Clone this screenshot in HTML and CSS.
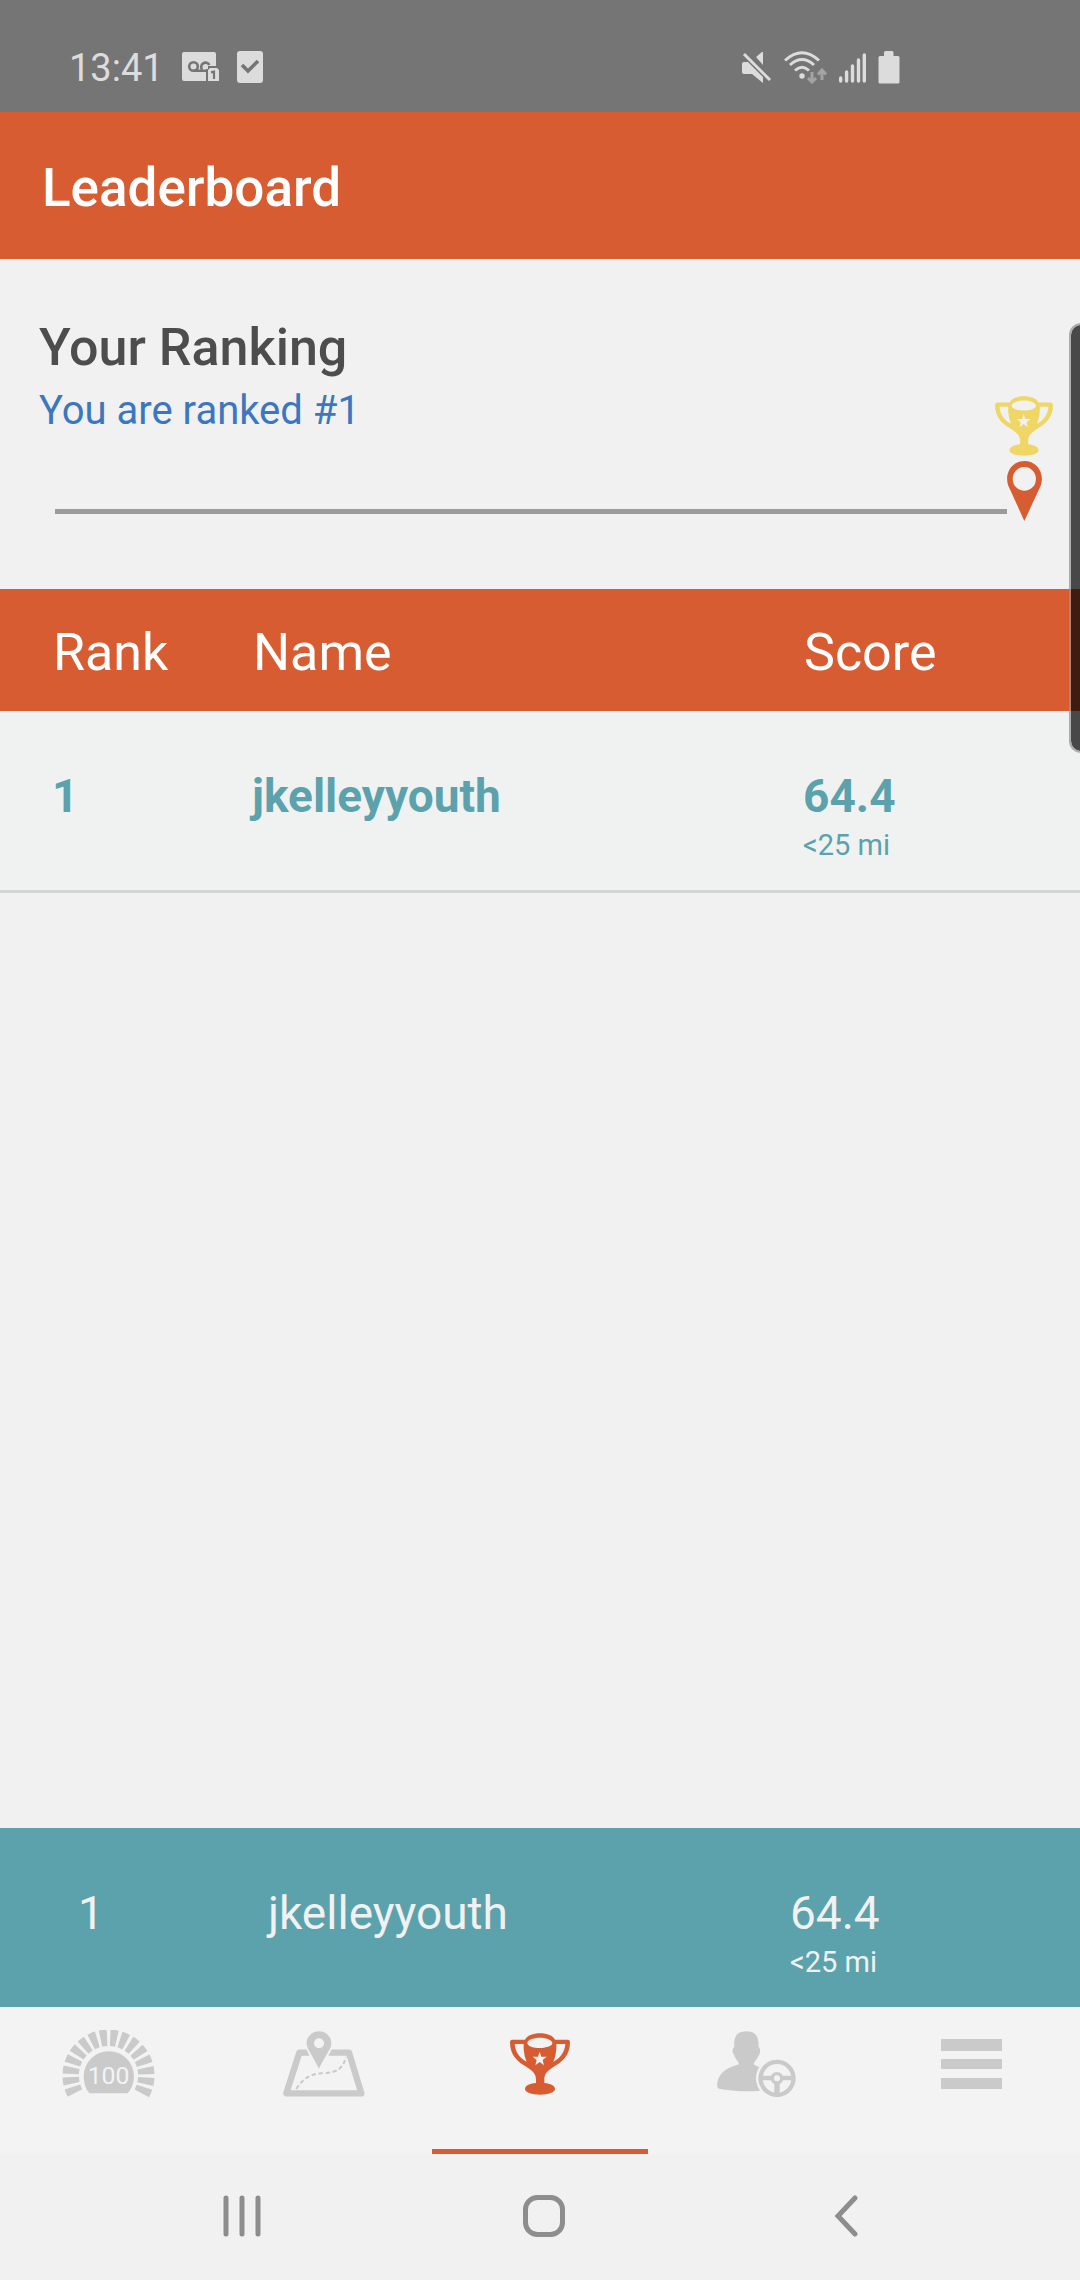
FILE: index.html
```html
<!DOCTYPE html>
<html lang="en">
<head>
<meta charset="utf-8">
<meta name="viewport" content="width=device-width, initial-scale=1">
<title>Leaderboard</title>
<link rel="stylesheet" href="styles.css">
</head>
<body>
<svg class="defs" aria-hidden="true">
  <symbol id="trophy" viewBox="272 70 180 186">
    <path fill="currentColor" fill-rule="evenodd" d="M317 90C323 78 341 71 362 71S401 78 407 90H445Q452 90 452 98C452 138 428 158 402 172C380 186 375 196 375 210V220C394 222 407 228 407 238C407 248 387 255 362 255S317 248 317 238C317 228 330 222 350 220V210C350 196 344 186 322 172C296 158 272 138 272 98Q272 90 279 90ZM362 84C341 84 324 91 324 100S341 115 362 115S399 108 399 100S383 84 362 84ZM286 103C288 127 301 146 322 156C316 142 312 124 313 103ZM438 103H411C412 124 408 142 402 156C423 146 436 127 438 103ZM361 126L356 141H340L352 151L348 167L361 157L374 167L370 151L382 141H366Z"/>
  </symbol>
</svg>
<div class="screen">
  <header class="status">
    <div class="status-group">
      <time class="clock">13:41</time>
      <svg width="37" height="30" viewBox="0 0 37 30" aria-label="Voicemail">
        <path fill="#dcdcdc" d="M2 0H32Q34 0 34 2V14H26V17H24V29H2Q0 29 0 27V2Q0 0 2 0Z"/>
        <g fill="none" stroke="#757575" stroke-width="2.6"><circle cx="11.5" cy="14.5" r="4.3"/><path d="M11.5 18.8H25M20 17.5A4.3 4.3 0 1 1 27.3 13"/></g>
        <path fill="#dcdcdc" d="M28 16H35L37 18V29H26V18Z"/>
        <path fill="none" stroke="#757575" stroke-width="2.2" d="M29 20.3L32 19.7V27"/>
      </svg>
      <svg width="26" height="32" viewBox="0 0 26 32" aria-label="Task complete">
        <rect width="26" height="32" rx="3" fill="#dcdcdc"/>
        <path d="M5 14L11 20L21 10" fill="none" stroke="#757575" stroke-width="3.6"/>
      </svg>
    </div>
    <div class="status-group status-icons">
      <svg width="30" height="32" viewBox="0 0 30 32" aria-label="Muted">
        <path fill="#dcdcdc" d="M0 13Q0 11 2 11H6L21 26V32L10 23H2Q0 23 0 21ZM14 6L20 1H21V14Z"/>
        <path d="M2 3L28 29" stroke="#dcdcdc" stroke-width="3"/>
      </svg>
      <svg width="43" height="33" viewBox="0 0 43 33" aria-label="Wi-Fi">
        <g fill="none" stroke="#dcdcdc" stroke-width="3"><path d="M1 9.500Q18-6 35 9.500M6 14Q18 3 30 14M11 19.500Q18 13 25 19.500"/></g>
        <circle cx="18" cy="25" r="2.700" fill="#dcdcdc"/>
        <path d="M28 21V31M24 27L28 31L32 27M38 29V20M34 23.500L38 19L42 23.500" fill="none" stroke="#a3a3a3" stroke-width="3"/>
      </svg>
      <svg width="27" height="31" viewBox="0 0 27 31" aria-label="Signal">
        <path d="M1.700 29V26M7.600 29V20M13.500 29V14M19.500 29V8M25.300 29V3" stroke="#dcdcdc" stroke-width="3.400" stroke-linecap="round"/>
      </svg>
      <svg width="22" height="33" viewBox="0 0 22 33" aria-label="Battery">
        <path fill="#dcdcdc" d="M6 5V1.500Q6 0 7.500 0H14Q15.500 0 15.500 1.500V5H20Q21.500 5 21.500 6.500V31Q21.500 32.500 20 32.500H2Q.5 32.500.5 31V6.500Q.5 5 2 5Z"/>
      </svg>
    </div>
  </header>

  <div class="appbar"><h1>Leaderboard</h1></div>

  <section class="ranking">
    <div class="ranking-main">
      <div>
        <h2>Your Ranking</h2>
        <p>You are ranked #1</p>
      </div>
      <div class="track"></div>
    </div>
    <div class="markers">
      <svg class="gold" width="58" height="60" aria-label="Trophy"><use href="#trophy"/></svg>
      <svg width="35" height="60" viewBox="201 483 105 181" aria-label="Your position">
        <path fill="#d75c32" fill-rule="evenodd" d="M253 483C283 483 306 506 306 537C306 551 301 561 296 571L253 664L211 571C206 561 201 551 201 537C201 506 224 483 253 483ZM253 501A35 36 0 1 0 253 573A35 36 0 1 0 253 501Z"/>
      </svg>
    </div>
  </section>

  <main class="board">
    <table class="scores">
      <colgroup><col class="col-rank"><col><col class="col-score"></colgroup>
      <thead><tr><th scope="col">Rank</th><th scope="col">Name</th><th scope="col">Score</th></tr></thead>
      <tbody><tr><td>1</td><td>jkelleyyouth</td><td>64.4<small>&lt;25 mi</small></td></tr></tbody>
    </table>
  </main>

  <table class="scores mine">
    <colgroup><col class="col-rank"><col><col class="col-score"></colgroup>
    <tbody><tr><td>1</td><td>jkelleyyouth</td><td>64.4<small>&lt;25 mi</small></td></tr></tbody>
  </table>

  <nav class="tabs" aria-label="Main">
    <a href="#score" aria-label="Score">
      <svg width="93" height="68" viewBox="68 64 278 203">
        <path d="M109.100 256.500A113 113 0 1 1 304.900 256.500" pathLength="240" fill="none" stroke="#cacaca" stroke-width="49" stroke-dasharray="10 5" stroke-dashoffset="-2.500"/>
        <path fill="#cacaca" d="M150 253C138 240 133 221 133 202A75 75 0 0 1 283 202C283 221 276 240 264 253Z"/>
        <text x="207" y="224" class="gauge-text">100</text>
      </svg>
    </a>
    <a href="#trips" aria-label="Trips">
      <svg width="82" height="66" viewBox="728 66 246 196">
        <path d="M777 130L738 252H963L926 130Z" fill="none" stroke="#cacaca" stroke-width="19" stroke-linejoin="round"/>
        <path d="M768 239C786 208 812 192 848 192C890 190 908 178 917 143" fill="none" stroke="#cacaca" stroke-width="6" stroke-dasharray="13 8"/>
        <path fill="#cacaca" stroke="#f3f3f3" stroke-width="12" paint-order="stroke" d="M836 66C857 66 873 82 873 102C873 117 862 128 836 178C810 128 799 117 799 102C799 82 815 66 836 66Z"/>
        <circle cx="836" cy="102" r="15" fill="#f3f3f3"/>
      </svg>
    </a>
    <a href="#leaderboard" class="active" aria-label="Leaderboard" aria-current="page">
      <svg width="60" height="62"><use href="#trophy"/></svg>
    </a>
    <a href="#driver" aria-label="Driver">
      <svg width="79" height="66" viewBox="890 64 237 198">
        <path fill="#cacaca" d="M978 65C1006 65 1016 80 1015 113C1022 118 1020 134 1014 139C1010 150 1001 156 1000 164C1006 169 1014 171 1020 174V243C975 248 925 242 896 237C889 235 890 226 891 220C898 182 928 173 956 164C954 154 945 150 942 137C935 130 935 118 942 112C940 80 950 65 978 65Z"/>
        <circle cx="1070" cy="206" r="63" fill="#f3f3f3"/>
        <g fill="none" stroke="#cacaca" stroke-width="13"><circle cx="1070" cy="206" r="49.500"/><circle cx="1070" cy="206" r="14" stroke-width="10"/><path d="M1022 205H1054M1086 205H1118"/><path d="M1070 222V255" stroke-width="16"/></g>
      </svg>
    </a>
    <a href="#menu" aria-label="Menu">
      <svg width="62" height="50" viewBox="0 0 62 50"><path fill="#cacaca" d="M0 0H61V12H0ZM0 20H61V30H0ZM0 39H61V50H0Z"/></svg>
    </a>
  </nav>

  <footer class="sysnav">
    <button type="button" aria-label="Recent apps">
      <svg width="40" height="42" viewBox="0 0 40 42"><path d="M4 3V39M20 3V39M36 3V39" stroke="#8d8d8d" stroke-width="5" stroke-linecap="round"/></svg>
    </button>
    <button type="button" aria-label="Home">
      <svg width="42" height="42" viewBox="0 0 42 42"><rect x="2.500" y="2.500" width="37" height="37" rx="12" fill="none" stroke="#8d8d8d" stroke-width="5"/></svg>
    </button>
    <button type="button" aria-label="Back">
      <svg width="24" height="42" viewBox="0 0 24 42"><path d="M21 3L4 21L21 39" fill="none" stroke="#8d8d8d" stroke-width="5" stroke-linecap="round"/></svg>
    </button>
  </footer>
  <div class="edge-handle"></div>
</div>
</body>
</html>
```
FILE: styles.css
```css
* { box-sizing: border-box; }

body {
  margin: 0;
  background: #f1f1f1;
  font-family: Roboto, "Liberation Sans", sans-serif;
}

svg { display: block; }

.defs {
  position: absolute;
  width: 0;
  height: 0;
}

.screen {
  position: relative;
  display: flex;
  flex-direction: column;
  min-height: 100vh;
  overflow: hidden;
}

.status {
  display: flex;
  justify-content: space-between;
  padding: 44px 180px 22px 69px;
  background: #757575;
  color: #dcdcdc;
}

.status-group {
  display: flex;
  align-items: center;
  gap: 18px;
  height: 46px;
}

.status-icons { gap: 12px; }

.clock {
  padding-top: 2px;
  font-size: 38px;
  line-height: 44px;
}

.appbar {
  padding: 46px 42px 41px;
  background: #d75c32;
  color: #fff;
}

h1, h2, p { margin: 0; }

h1, h2 {
  font-weight: 500;
  line-height: 60px;
}

h1 { font-size: 53px; }

h2 {
  color: #4d4d4d;
  font-size: 52px;
}

.ranking {
  display: grid;
  grid-template-columns: 1fr 58px;
  padding: 59px 27px 68px 39px;
}

.ranking-main {
  display: flex;
  flex-direction: column;
  justify-content: space-between;
  padding-bottom: 7px;
}

.ranking p {
  margin-top: 9px;
  color: #3b76c0;
  font-size: 40px;
  line-height: 48px;
}

.track {
  height: 5px;
  margin: 0 -12px 0 16px;
  background: #9b9b9d;
}

.markers {
  display: flex;
  flex-direction: column;
  align-items: center;
  gap: 5px;
  padding-top: 78px;
}

.gold { color: #efd665; }

.board { flex: 1; }

.scores {
  width: 100%;
  table-layout: fixed;
  border-collapse: collapse;
  text-align: left;
}

.col-rank { width: 252px; }
.col-score { width: 277px; }

.scores th {
  padding: 34px 0 28px 1px;
  background: #d75c32;
  color: #fff;
  font-size: 52px;
  font-weight: 400;
  line-height: 60px;
}

.scores td {
  padding: 58px 0 23px;
  vertical-align: top;
  font-size: 46px;
  line-height: 54px;
}

.scores th:first-child { padding-left: 53px; }
.scores td:first-child { padding-left: 52px; }

.board tbody {
  background: #f0f2f1;
  color: #5ba2ac;
  font-weight: 700;
}

.board tbody tr { box-shadow: 0 3px #d5d5d5; }

.scores small {
  display: block;
  font-size: 29px;
  font-weight: 400;
  line-height: 44px;
}

.mine {
  background: #5ba2ac;
  color: #f1f1f1;
}

.mine .col-rank { width: 268px; }
.mine .col-score { width: 290px; }
.mine td:first-child { padding-left: 78px; }

.tabs {
  display: grid;
  grid-template-columns: repeat(5, 1fr);
  background: #f3f3f3;
}

.tabs a {
  display: flex;
  flex-direction: column;
  align-items: center;
  justify-content: center;
  padding: 23px 0 51px;
  min-height: 147px;
  border-bottom: 5px solid transparent;
  color: #cacaca;
}

.tabs .active {
  border-color: #d75c32;
  color: #d75c32;
}

.gauge-text {
  fill: #f3f3f3;
  font-size: 74px;
  text-anchor: middle;
}

.sysnav {
  display: grid;
  grid-template-columns: repeat(3, 1fr);
  padding: 0 83px 0 91px;
}

.sysnav button {
  display: grid;
  place-items: center;
  height: 126px;
  padding: 0 0 2px;
  border: 0;
  background: none;
}

/* Edge panel handle floating over the right side of the app */
.edge-handle {
  position: absolute;
  top: 323px;
  right: -20px;
  width: 31px;
  height: 430px;
  border: 2px solid rgba(150, 150, 150, .75);
  border-radius: 12px;
  background: rgba(0, 0, 0, .7);
  background-clip: padding-box;
}
```
